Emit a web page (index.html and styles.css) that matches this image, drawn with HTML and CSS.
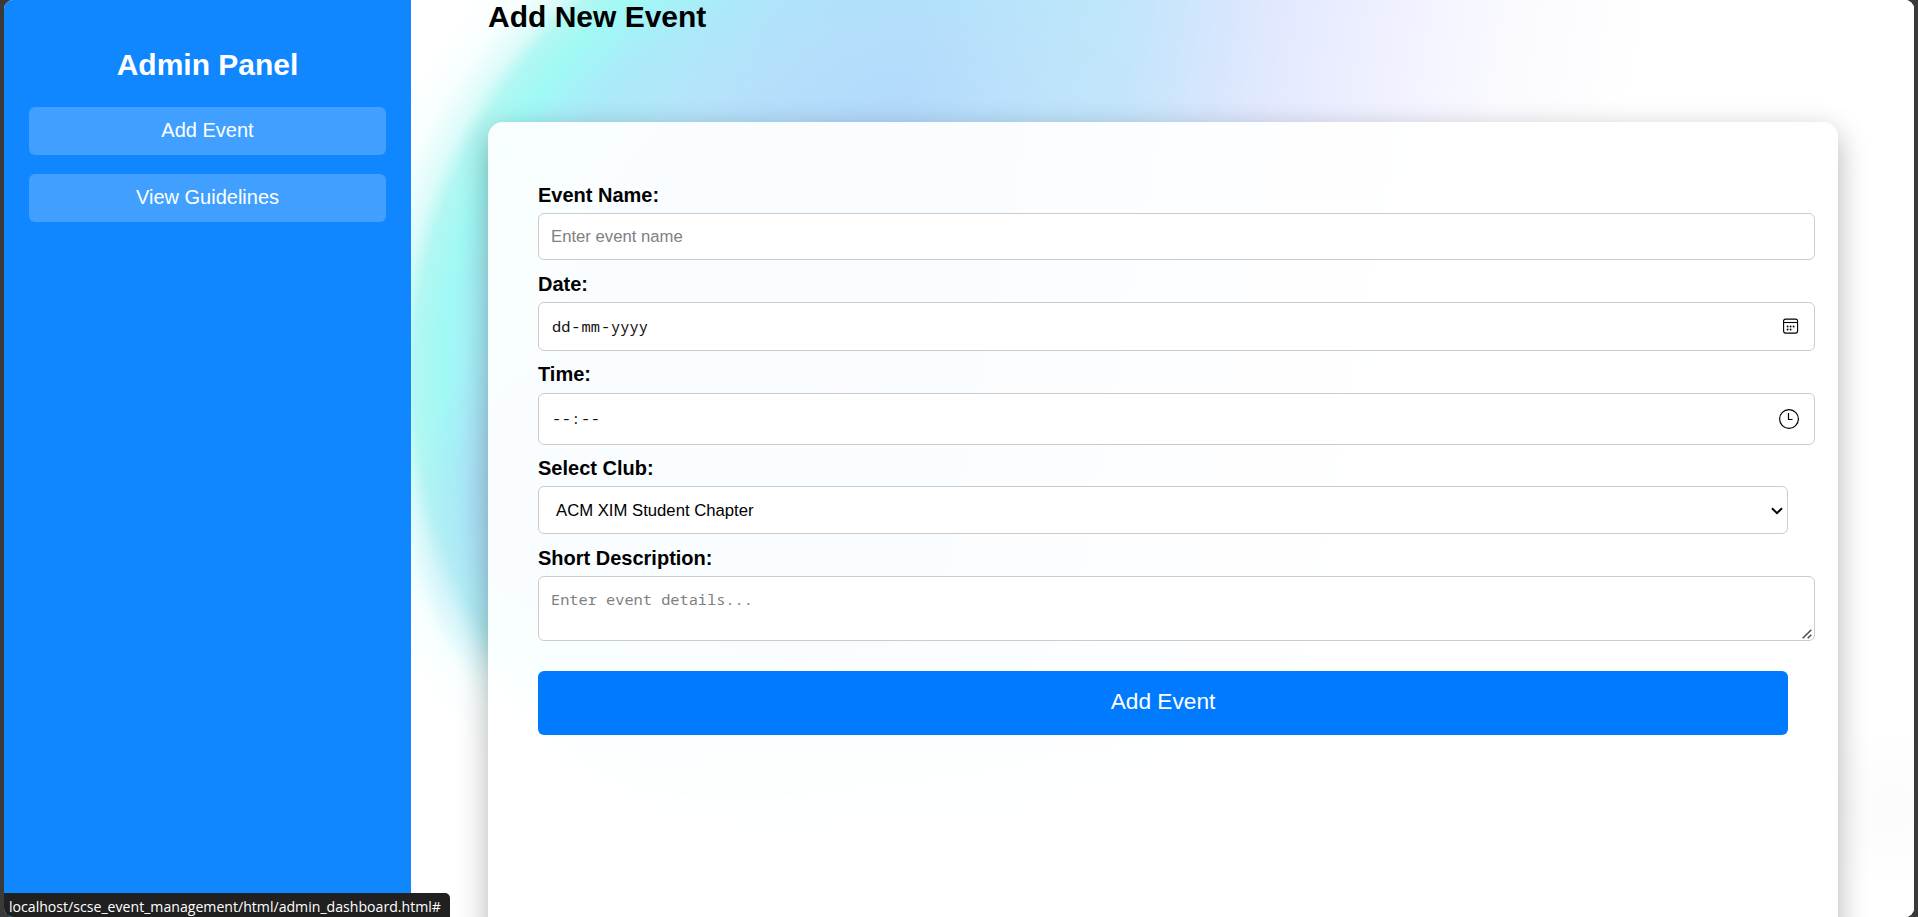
FILE: index.html
```html
<!DOCTYPE html>
<html lang="en">
<head>
<meta charset="utf-8">
<title>Admin Dashboard</title>
<link rel="stylesheet" href="styles.css">
</head>
<body>
<div class="window">
  <aside class="sidebar">
    <h2 class="sidebar-title">Admin Panel</h2>
    <a class="nav-link">Add Event</a>
    <a class="nav-link">View Guidelines</a>
  </aside>
  <main class="content">
    <h1 class="page-title">Add New Event</h1>
    <form class="card">
      <label class="label">Event Name:</label>
      <input class="field name-field" type="text" placeholder="Enter event name">
      <label class="label">Date:</label>
      <div class="field date-field">
        <span class="mono">dd<i>-</i>mm<i>-</i>yyyy</span>
        <svg class="calendar" width="16" height="16" viewBox="0 0 16 16" fill="none" stroke="#000">
          <rect x=".6" y="1.1" width="14" height="14" rx="2" stroke-width="1.1"/>
          <path d="M.6 4.5h14" stroke-width="1.1"/>
          <g fill="#000" stroke="none"><circle cx="4.6" cy="8.5" r=".95"/><circle cx="7.6" cy="8.5" r=".95"/><circle cx="10.6" cy="8.5" r=".95"/><circle cx="4.6" cy="11.5" r=".95"/><circle cx="7.6" cy="11.5" r=".95"/></g>
        </svg>
      </div>
      <label class="label">Time:</label>
      <div class="field time-field">
        <span class="mono time">--:--</span>
        <svg class="clock" width="22" height="22" viewBox="0 0 22 22" fill="none" stroke="#000" stroke-width="1.2">
          <circle cx="11" cy="11" r="9.4"/><path d="M10.5 5v6.5h4"/>
        </svg>
      </div>
      <label class="label">Select Club:</label>
      <div class="field club-field">
        <span>ACM XIM Student Chapter</span>
        <svg class="chevron" width="12" height="8" viewBox="0 0 12 8" fill="none" stroke="#000" stroke-width="2"><path d="M1 1.2l5 4.9 5-4.9"/></svg>
      </div>
      <label class="label">Short Description:</label>
      <div class="field text-field">
        <span class="mono details">Enter event details...</span>
        <svg class="grip" width="10" height="10" viewBox="0 0 10 10" fill="none" stroke="#444" stroke-width="1.4"><path d="M.7 9.3l8.6-8.6M5.7 9.3l3.6-3.6"/></svg>
      </div>
      <button class="submit" type="button">Add Event</button>
    </form>
  </main>
  <div class="status">localhost/scse_event_management/html/admin_dashboard.html#</div>
</div>
</body>
</html>
```
FILE: styles.css
```css
* { box-sizing: border-box; }
body {
  margin: 0;
  height: 917px;
  overflow: hidden;
  padding: 0 4px;
  background: #3a3a3a;
  font-family: "Liberation Sans", Arial, sans-serif;
}
.window {
  position: relative;
  display: flex;
  height: 917px;
  border-radius: 9px;
  overflow: hidden;
  background: #fff;
}
.sidebar {
  flex: none;
  width: 407px;
  padding: 47px 25px 0;
  display: flex;
  flex-direction: column;
  background: #1087ff;
  color: #fff;
  text-align: center;
}
.sidebar-title { margin: 0 0 25px; font-size: 30px; line-height: 35px; }
.nav-link {
  height: 48px;
  margin-bottom: 19px;
  padding-top: 12px;
  border-radius: 6px;
  background: #409fff;
  font-size: 20px;
  line-height: 23px;
}
.content {
  flex: 1;
  min-width: 0;
  height: 917px;
  padding: 0 76px 0 77px;
  background:
    radial-gradient(circle 80px at 1480px 808px, #fbfbfb, rgba(251,251,251,0)),
    linear-gradient(to bottom, rgba(255,255,255,0) 640px, #fff 860px),
    linear-gradient(100deg, rgba(190,226,251,0) 500px, #c3e5fb 720px, #d6e6fd 800px, #e6eaff 880px, #eff1ff 970px, #fafaff 1090px, #fff 1220px),
    radial-gradient(ellipse 110px 170px at 110px 520px, rgba(178,216,250,.85), rgba(178,216,250,.6) 45%, rgba(178,216,250,0)),
    radial-gradient(circle 240px at 500px 110px, rgba(178,216,252,.8), rgba(178,216,252,0)),
    radial-gradient(circle 575px at 498px 375px, #b3d5fb 0, #b3dcfb 42%, #b6e4fa 58%, #ace9f9 71%, #a5f2f8 77%, #a0f9f5 81%, #b2f7f2 86%, rgba(205,250,248,.7) 89%, rgba(235,254,253,.4) 94%, rgba(255,255,255,0) 100%),
    #fff;
}
.page-title { margin: 0 0 88px; font-size: 30px; line-height: 34px; color: #000; }
.card {
  height: 920px;
  padding: 62px 50px 0;
  border-radius: 15px;
  background: rgba(255,255,255,.93);
  box-shadow: 0 10px 30px rgba(0,0,0,.3);
}
.label {
  display: block;
  margin-bottom: 6px;
  font-size: 20px;
  font-weight: bold;
  line-height: 23px;
  color: #000;
}
.field {
  display: flex;
  align-items: center;
  justify-content: space-between;
  width: 1277px;
  border: 1px solid #ccc;
  border-radius: 6px;
  background: #fff;
  color: #111;
  font-family: "Liberation Sans", Arial, sans-serif;
  font-size: 16.7px;
}
.name-field { height: 47px; margin: 0 0 13px; padding: 0 12px; outline: none; }
.name-field::placeholder { color: #808080; }
.date-field { height: 49px; margin-bottom: 12px; padding: 0 15px 1px 13px; }
.time-field { height: 52px; margin: 0 0 12px; padding: 0 14px 1px 13px; }
.date-field + .label { margin-bottom: 7px; }
.club-field { width: 1250px; height: 48px; margin-bottom: 13px; padding: 1px 4px 0 17px; color: #000; }
.text-field { position: relative; height: 65px; align-items: flex-start; padding: 12px; }
.mono { font-family: "Noto Sans Mono", "Liberation Mono", monospace; font-size: 15.3px; line-height: 20px; }
.mono i { font-style: normal; padding: 0 1px; }
.time { letter-spacing: .5px; padding-bottom: 1px; }
.details { color: #808080; }
.grip { position: absolute; right: 2px; bottom: 1px; }
.submit {
  width: 1250px;
  height: 64px;
  margin-top: 30px;
  padding: 0 0 3px;
  border: 0;
  border-radius: 6px;
  background: #007bff;
  color: #fff;
  font-family: inherit;
  font-size: 22.7px;
}
.status {
  position: absolute;
  left: -1px;
  bottom: 0;
  width: 447px;
  height: 24px;
  padding-left: 6px;
  border-radius: 0 5px 0 0;
  background: #202020;
  color: #fff;
  font-family: "Open Sans", "Noto Sans", sans-serif;
  font-size: 14.12px;
  line-height: 27px;
  white-space: nowrap;
}
```
